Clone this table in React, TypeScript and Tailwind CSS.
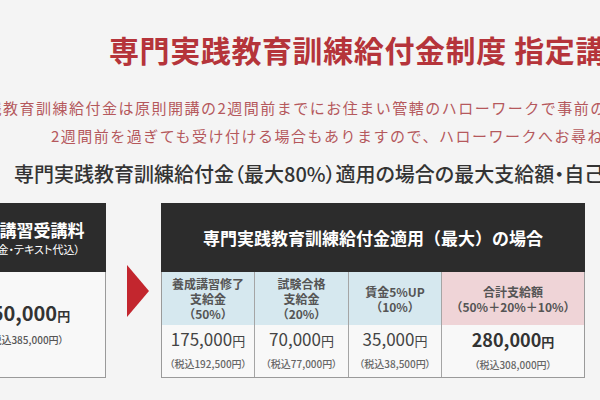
const cols = [
  { label: ["養成講習修了", "支給金", "（50%）"], value: "175,000", tax: "（税込192,500円）", total: false },
  { label: ["試験合格", "支給金", "（20%）"], value: "70,000", tax: "（税込77,000円）", total: false },
  { label: ["賃金5%UP", "（10%）"], value: "35,000", tax: "（税込38,500円）", total: false },
  { label: ["合計支給額", "（50%＋20%＋10%）"], value: "280,000", tax: "（税込308,000円）", total: true },
];

export default function App() {
  return (
    <div className="w-[600px] h-[400px] overflow-hidden bg-[#f4f4f4] font-['Noto_Sans_CJK_JP','Noto_Sans',sans-serif]">
      {/* heading */}
      <h1 className="ml-[109px] mt-[31px] whitespace-nowrap text-[30px] leading-[36px] tracking-[0.6px] font-bold text-[#b5343a]">
        専門実践教育訓練給付金制度 指定講座
      </h1>

      <div className="mt-[27px] text-[15px] leading-[28px] tracking-[1.5px] text-[#b5585c] whitespace-nowrap">
        <p className="ml-[-63px]">専門実践教育訓練給付金は原則開講の2週間前までにお住まい管轄のハローワークで事前の手続きが必要です。</p>
        <p className="ml-[51px]">2週間前を過ぎても受け付ける場合もありますので、ハローワークへお尋ねください。</p>
      </div>

      <h2 className="ml-[14px] mt-[10px] whitespace-nowrap text-[20px] leading-[28px] font-medium text-[#333] [font-feature-settings:'palt']">
        専門実践教育訓練給付金（最大80%）適用の場合の最大支給額・自己負担額
      </h2>

      {/* comparison */}
      <div className="flex items-center ml-[-56px] mt-[15px]">
        <div className="w-[162px] shrink-0">
          <div className="h-[69px] bg-[#2c2c2c] text-white text-center pt-[15px]">
            <div className="text-[17px] leading-[24px] font-bold">養成講習受講料</div>
            <div className="text-[11px] leading-[14px] [font-feature-settings:'palt']">（入学金・テキスト代込）</div>
          </div>
          <div className="h-[106px] bg-[#f8f8f8] border-x border-b border-[#9a9a9a] text-center text-[#333] pt-[27px]">
            <div className="text-[20px] leading-[28px] font-bold whitespace-nowrap">
              350,000<span className="text-[13px]">円</span>
            </div>
            <div className="mt-[3px] text-[10px] leading-[14px] text-[#555] font-medium [font-feature-settings:'palt']">（税込385,000円）</div>
          </div>
        </div>

        <svg className="ml-[21px] mr-[12px] shrink-0" width="22" height="52" viewBox="0 0 22 52">
          <polygon points="0,0 22,26 0,52" fill="#c3262e" />
        </svg>

        <div className="w-[424px] shrink-0">
          <div className="h-[69px] bg-[#2c2c2c] text-white flex items-center justify-center text-[17px] font-bold whitespace-nowrap">
            専門実践教育訓練給付金適用（最大）の場合
          </div>
          <div className="grid grid-cols-[92px_94px_93px_1fr] border-x border-b border-[#9a9a9a]">
            {cols.map((c, i) => (
              <div key={i} className={i > 0 ? "border-l border-[#a5a5a5]" : ""}>
                <div
                  className={
                    "h-[53px] flex flex-col items-center justify-center text-[12px] leading-[15px] font-bold text-[#555] whitespace-nowrap " +
                    (c.total ? "bg-[#efd4d7]" : "bg-[#d6e8ef]")
                  }
                >
                  {c.label.map((l) => (
                    <span key={l}>{l}</span>
                  ))}
                </div>
                <div className="h-[52px] bg-[#f8f8f8] text-center text-[#444] pt-[3px]">
                  <div
                    className={
                      "leading-[22px] whitespace-nowrap " +
                      (c.total ? "text-[18px] font-bold text-[#333]" : "text-[17px] font-normal")
                    }
                  >
                    {c.value}
                    <span className="text-[13px]">円</span>
                  </div>
                  <div className="mt-[5px] text-[10px] leading-[14px] text-[#666] font-medium [font-feature-settings:'palt']">{c.tax}</div>
                </div>
              </div>
            ))}
          </div>
        </div>
      </div>
    </div>
  );
}
